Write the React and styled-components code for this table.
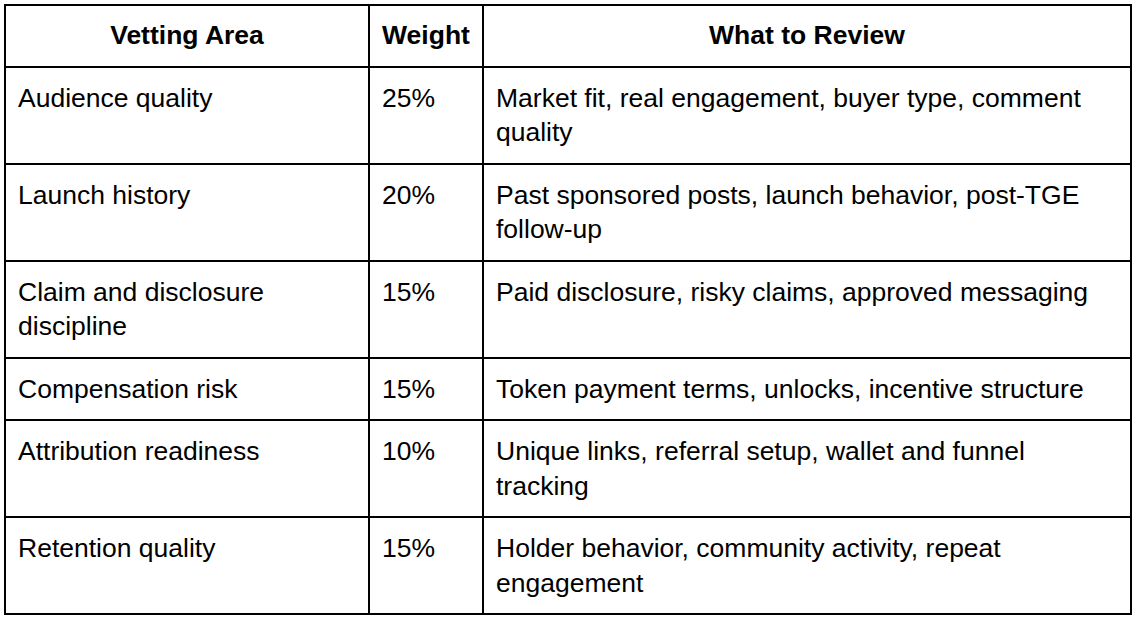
import React from 'react';
import styled, { createGlobalStyle } from 'styled-components';

const GlobalStyle = createGlobalStyle`
  html, body {
    margin: 0;
    padding: 0;
    background: #fff;
  }
  body {
    font-family: "Liberation Sans", Arial, sans-serif;
    color: #000;
  }
`;

const Page = styled.div`
  padding: 4px;
`;

const Table = styled.table`
  width: 1126px;
  border-collapse: collapse;
  table-layout: fixed;
  font-size: 26.5px;
  line-height: 34.5px;
`;

const Col = styled.col`
  width: ${props => props.$width}px;
`;

const HeadCell = styled.th`
  border: 2px solid #000;
  padding: 12px 12px 13px;
  font-weight: 700;
  text-align: center;
  vertical-align: top;
`;

const Cell = styled.td`
  border: 2px solid #000;
  padding: 13px 12px;
  font-weight: 400;
  text-align: left;
  vertical-align: top;
`;

const rows = [
  ['Audience quality', '25%', 'Market fit, real engagement, buyer type, comment quality'],
  ['Launch history', '20%', 'Past sponsored posts, launch behavior, post-TGE follow-up'],
  ['Claim and disclosure discipline', '15%', 'Paid disclosure, risky claims, approved messaging'],
  ['Compensation risk', '15%', 'Token payment terms, unlocks, incentive structure'],
  ['Attribution readiness', '10%', 'Unique links, referral setup, wallet and funnel tracking'],
  ['Retention quality', '15%', 'Holder behavior, community activity, repeat engagement'],
];

export default function App() {
  return (
    <>
      <GlobalStyle />
      <Page>
        <Table>
          <colgroup>
            <Col $width={364} />
            <Col $width={114} />
            <Col $width={648} />
          </colgroup>
          <thead>
            <tr>
              <HeadCell>Vetting Area</HeadCell>
              <HeadCell>Weight</HeadCell>
              <HeadCell>What to Review</HeadCell>
            </tr>
          </thead>
          <tbody>
            {rows.map(([area, weight, review]) => (
              <tr key={area}>
                <Cell>{area}</Cell>
                <Cell>{weight}</Cell>
                <Cell>{review}</Cell>
              </tr>
            ))}
          </tbody>
        </Table>
      </Page>
    </>
  );
}
